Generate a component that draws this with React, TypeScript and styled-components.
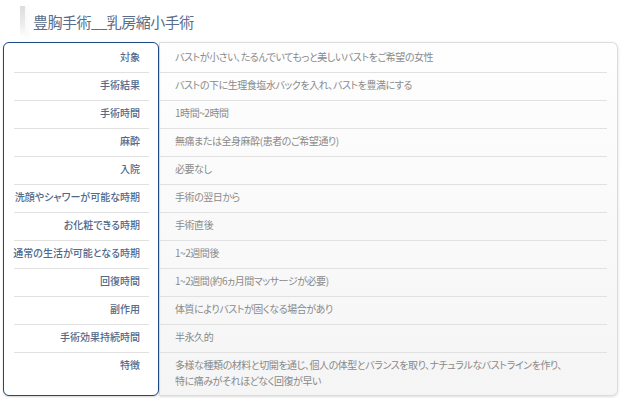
import React from "react";
import styled, { createGlobalStyle } from "styled-components";

const GlobalStyle = createGlobalStyle`
  html, body { margin: 0; padding: 0; background: #ffffff; }
  body {
    font-family: "Noto Sans CJK JP", "Noto Sans", sans-serif;
    font-feature-settings: "palt";
    -webkit-font-smoothing: antialiased;
  }
`;

const Page = styled.div`
  width: 621px;
  box-sizing: border-box;
  padding: 0 3px 3px 3px;
`;

const TitleBar = styled.div`
  display: flex;
  align-items: center;
  gap: 8px;
  height: 42px;
  box-sizing: border-box;
  padding: 6px 0 4px 17px;
`;

const Accent = styled.span`
  width: 5px;
  align-self: stretch;
  background: linear-gradient(to bottom, #dcdcdc 0%, #ececec 55%, #ffffff 100%);
  box-shadow: 3px 0 6px rgba(0, 0, 0, 0.04);
`;

const Title = styled.h1`
  margin: 0;
  font-size: 15px;
  font-weight: 400;
  color: #5a6d8a;
  letter-spacing: -0.5px;
  line-height: 20px;
`;

const Table = styled.div`
  display: flex;
  align-items: stretch;
`;

const LabelPanel = styled.div`
  position: relative;
  z-index: 1;
  flex: none;
  width: 156px;
  min-width: 0;
  box-sizing: border-box;
  border: 1px solid #1d4a87;
  border-radius: 6px;
  background: #ffffff;
  padding: 2px 9px 0 10px;
  box-shadow: 0 1px 2px rgba(0, 0, 0, 0.18);
`;

const ValuePanel = styled.div`
  flex: 1;
  min-width: 0;
  box-sizing: border-box;
  border: 1px solid #dcdcdc;
  border-left-color: #e2e2e2;
  border-radius: 0 6px 6px 0;
  background: linear-gradient(to bottom, #fefefe 0%, #f5f5f5 100%);
  padding: 2px 10px 0 0;
  box-shadow: 0 1px 3px rgba(0, 0, 0, 0.14);
`;

const Row = styled.div<{ $multi?: boolean }>`
  box-sizing: border-box;
  padding-top: 4px;
  padding-bottom: ${(p) => (p.$multi ? "5px" : "7px")};
  line-height: 16px;
  font-size: 10px;
  border-bottom: 1px solid #e1e1e1;
  &:last-child { border-bottom: none; }
`;

const LabelRow = styled(Row)`
  display: flex;
  justify-content: flex-end;
  align-items: flex-start;
  padding-right: 9px;
  color: #51698b;
  font-weight: 500;
  white-space: nowrap;
`;

const LabelText = styled.span`
  flex: none;
`;

const ValueRow = styled(Row)`
  padding-left: 15px;
  color: #8a8a8a;
  font-weight: 400;
  letter-spacing: -0.45px;
  white-space: nowrap;
`;

const rows: { label: string; value: string[] }[] = [
  { label: "対象", value: ["バストが小さい、たるんでいてもっと美しいバストをご希望の女性"] },
  { label: "手術結果", value: ["バストの下に生理食塩水バックを入れ、バストを豊満にする"] },
  { label: "手術時間", value: ["1時間~2時間"] },
  { label: "麻酔", value: ["無痛または全身麻酔(患者のご希望通り)"] },
  { label: "入院", value: ["必要なし"] },
  { label: "洗顔やシャワーが可能な時期", value: ["手術の翌日から"] },
  { label: "お化粧できる時期", value: ["手術直後"] },
  { label: "通常の生活が可能となる時期", value: ["1~2週間後"] },
  { label: "回復時間", value: ["1~2週間(約6ヵ月間マッサージが必要)"] },
  { label: "副作用", value: ["体質によりバストが固くなる場合があり"] },
  { label: "手術効果持続時間", value: ["半永久的"] },
  {
    label: "特徴",
    value: [
      "多様な種類の材料と切開を通じ、個人の体型とバランスを取り、ナチュラルなバストラインを作り、",
      "特に痛みがそれほどなく回復が早い",
    ],
  },
];

export default function App() {
  return (
    <>
      <GlobalStyle />
      <Page>
        <TitleBar>
          <Accent />
          <Title>豊胸手術__乳房縮小手術</Title>
        </TitleBar>
        <Table>
          <LabelPanel>
            {rows.map((r) => (
              <LabelRow
                key={r.label}
                $multi={r.value.length > 1}
                style={{ height: (r.value.length > 1 ? 10 : 12) + r.value.length * 16 }}
              >
                <LabelText>{r.label}</LabelText>
              </LabelRow>
            ))}
          </LabelPanel>
          <ValuePanel>
            {rows.map((r) => (
              <ValueRow key={r.label} $multi={r.value.length > 1}>
                {r.value.map((line, i) => (
                  <div key={i}>{line}</div>
                ))}
              </ValueRow>
            ))}
          </ValuePanel>
        </Table>
      </Page>
    </>
  );
}
